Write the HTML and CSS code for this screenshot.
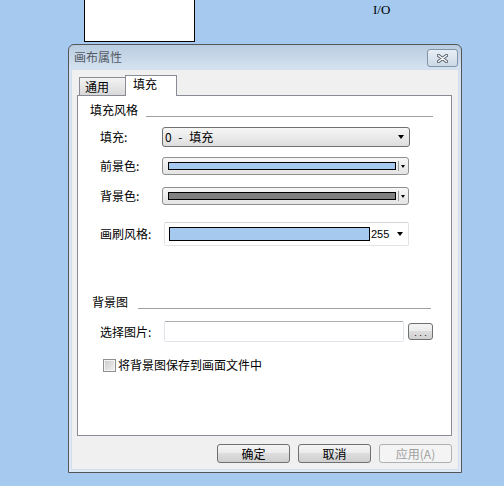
FILE: index.html
```html
<!DOCTYPE html>
<html lang="zh-CN">
<head>
    <meta charset="UTF-8">
    <title>画布属性</title>
    <link rel="stylesheet" href="styles.css">
</head>
<body>
    <div class="desk">
        <div class="shape"></div>
        <div class="io">I/O</div>

        <div class="dialog">
            <div class="titlebar">
                <span class="title">画布属性</span>
                <div class="close">
                    <svg width="11" height="9" viewBox="0 0 11 9">
                        <path d="M1.5 1.5 L9.5 7.5 M9.5 1.5 L1.5 7.5" stroke="#56606c" stroke-width="3.4" stroke-linecap="round" fill="none"/>
                        <path d="M1.5 1.5 L9.5 7.5 M9.5 1.5 L1.5 7.5" stroke="#fff" stroke-width="1.5" stroke-linecap="round" fill="none"/>
                    </svg>
                </div>
            </div>

            <div class="client">
                <div class="tabs">
                    <div class="tab">通用</div>
                    <div class="tab active">填充</div>
                </div>

                <div class="panel">
                    <div class="group g-fill">填充风格</div>

                    <div class="row r1">
                        <span class="lbl">填充:</span>
                        <div class="combo">
                            <span class="value">0 - 填充</span>
                            <span class="arrow"></span>
                        </div>
                    </div>
                    <div class="row r2">
                        <span class="lbl">前景色:</span>
                        <div class="color-combo">
                            <span class="swatch" style="background:#a6c9ef"></span>
                            <span class="sep"></span>
                            <span class="arrow small"></span>
                        </div>
                    </div>
                    <div class="row r3">
                        <span class="lbl">背景色:</span>
                        <div class="color-combo">
                            <span class="swatch" style="background:#808080"></span>
                            <span class="sep"></span>
                            <span class="arrow small"></span>
                        </div>
                    </div>
                    <div class="row r4">
                        <span class="lbl">画刷风格:</span>
                        <div class="brush">
                            <span class="bar"></span>
                            <span class="num">255</span>
                            <span class="arrow"></span>
                        </div>
                    </div>

                    <div class="group g-bg">背景图</div>

                    <div class="row r5">
                        <span class="lbl">选择图片:</span>
                        <div class="path"></div>
                        <div class="browse">. . .</div>
                    </div>
                    <div class="row r6">
                        <span class="check"></span>
                        <span>将背景图保存到画面文件中</span>
                    </div>
                </div>

                <div class="buttons">
                    <div class="btn">确定</div>
                    <div class="btn">取消</div>
                    <div class="btn disabled">应用(A)</div>
                </div>
            </div>
        </div>
    </div>
</body>
</html>
```

FILE: styles.css
```css
* {
    margin: 0;
    padding: 0;
    box-sizing: border-box;
}
body {
    background: #a6c9ef;
    font: 12px/16px "Noto Sans CJK SC", "Liberation Sans", sans-serif;
    color: #000;
    overflow: hidden;
}
.desk {
    position: relative;
    width: 504px;
    height: 486px;
}
.shape {
    position: absolute;
    left: 84px;
    top: -1px;
    width: 111px;
    height: 43px;
    background: #fff;
    border: 1px solid #000;
}
.io {
    position: absolute;
    left: 373px;
    top: 3px;
    font: 13px/13px "Liberation Serif", serif;
}

/* window */
.dialog {
    position: absolute;
    left: 68px;
    top: 44px;
    width: 394px;
    height: 429px;
    display: flex;
    flex-direction: column;
    padding: 0 2px 2px;
    border: 1px solid #555;
    border-radius: 6px 6px 0 0;
    background: linear-gradient(#b9cce0, #d5e2f1 24px, #dfe9f5);
}
.titlebar {
    height: 24px;
    display: flex;
    justify-content: space-between;
    align-items: center;
    padding: 0 1px 0 3px;
}
.title {
    color: #545b64;
}
.close {
    align-self: flex-start;
    margin-top: 4px;
    width: 31px;
    height: 18px;
    display: flex;
    align-items: center;
    justify-content: center;
    border: 1px solid #8494a7;
    border-radius: 3px;
    background: linear-gradient(#e8eef5, #cdd9e7);
}
.client {
    flex: 1;
    background: #f0f0f0;
    border: 1px solid #d3dfed;
}

/* tabs */
.tabs {
    position: relative;
    z-index: 1;
    display: flex;
    align-items: flex-end;
    height: 21px;
    margin: 5px 0 0 7px;
}
.tab {
    width: 47px;
    height: 18px;
    margin-bottom: 1px;
    padding: 1px 0 0 5px;
    border: 1px solid #898c95;
    border-bottom: none;
    background: linear-gradient(#f3f3f3, #d9d9d9);
}
.tab.active {
    width: 52px;
    height: 21px;
    margin: 0 0 0 -1px;
    padding: 0 0 0 7px;
    background: #fff;
}
.panel {
    width: 375px;
    height: 341px;
    margin: -1px 0 0 5px;
    padding: 6px 18px 0 12px;
    border: 1px solid #898c95;
    background: #fff;
}

/* group headers */
.group {
    display: flex;
    align-items: flex-end;
    height: 16px;
}
.group::after {
    content: "";
    flex: 1;
    height: 1px;
    margin: 0 0 1px 8px;
    background: #a0a0a0;
}
.g-bg {
    margin: 48px 2px 0 2px;
}
.g-bg::after {
    margin-left: 10px;
}

/* rows */
.row {
    display: flex;
    align-items: center;
    margin-left: 10px;
}
.lbl {
    width: 62px;
}
.r1 { margin-top: 9px; }
.r2 { margin-top: 10px; }
.r3 { margin-top: 12px; }
.r4 { margin-top: 17px; }
.r5 { margin-top: 11px; }
.r6 { margin-top: 15px; }

.arrow {
    margin-left: auto;
    width: 0;
    height: 0;
    border-left: 3.5px solid transparent;
    border-right: 3.5px solid transparent;
    border-top: 4px solid #000;
}
.arrow.small {
    margin-left: 2px;
    border-left-width: 2.5px;
    border-right-width: 2.5px;
    border-top-width: 3px;
}
.combo {
    width: 248px;
    height: 20px;
    display: flex;
    align-items: center;
    padding: 0 5px 0 2px;
    border: 1px solid #707070;
    border-radius: 3px;
    background: linear-gradient(#f6f6f6, #dedede);
}
.value {
    word-spacing: 4px;
}
.color-combo {
    width: 247px;
    height: 18px;
    display: flex;
    align-items: center;
    padding: 0 3px 0 5px;
    border: 1px solid #8e8f8f;
    border-radius: 3px;
    background: linear-gradient(#f7f7f7, #e4e4e4);
}
.swatch {
    width: 230px;
    height: 8px;
    border: 1px solid #000;
}
.sep {
    width: 1px;
    height: 10px;
    margin-left: 2px;
    background: #9a9a9a;
}
.brush {
    width: 245px;
    height: 24px;
    margin-left: 2px;
    display: flex;
    align-items: center;
    padding: 0 5px 0 4px;
    border: 1px solid #e2e3e6;
    border-top-color: #d4d5d8;
    border-radius: 2px;
    background: #fff;
}
.bar {
    width: 201px;
    height: 14px;
    border: 1px solid #000;
    background: #a6c9ef;
}
.num {
    margin-left: 1px;
    font: 11px/14px "Liberation Sans", sans-serif;
}
.path {
    width: 240px;
    height: 21px;
    margin-left: 2px;
    border: 1px solid #e2e3ea;
    border-top-color: #abadb3;
    border-radius: 2px;
    background: #fff;
}
.browse {
    width: 25px;
    height: 17px;
    margin-left: 4px;
    padding-top: 3px;
    text-align: center;
    font: 9px/12px "Liberation Sans", sans-serif;
    border: 1px solid #707070;
    border-radius: 3px;
    background: linear-gradient(#f4f4f4, #ebebeb 50%, #dddddd 50%, #d0d0d0);
}
.check {
    width: 13px;
    height: 13px;
    margin: 0 2px 0 3px;
    border: 1px solid #8e8f8f;
    box-shadow: inset 0 0 0 1px #f4f4f4;
    background: linear-gradient(135deg, #c9c9c9, #f4f4f4);
}

/* bottom buttons */
.buttons {
    display: flex;
    justify-content: flex-end;
    gap: 8px;
    margin: 8px 6px 0 0;
}
.btn {
    width: 73px;
    height: 19px;
    line-height: 17px;
    text-align: center;
    border: 1px solid #707070;
    border-radius: 3px;
    background: linear-gradient(#f4f4f4, #ebebeb 50%, #dddddd 50%, #cfcfcf);
}
.btn.disabled {
    color: #a0a0a0;
    border-color: #adb2b5;
    background: #f4f4f4;
}
```
